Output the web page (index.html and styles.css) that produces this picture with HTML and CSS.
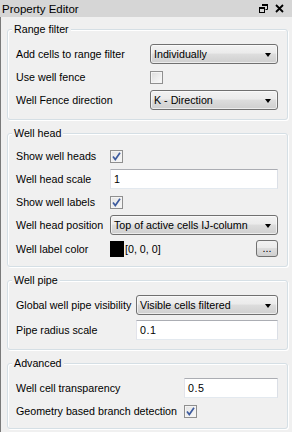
FILE: index.html
```html
<!DOCTYPE html>
<html>
<head>
<meta charset="utf-8">
<link rel="stylesheet" href="styles.css">
</head>
<body>
<div class="dock">
  <div class="titlebar">
    <span class="title">Property Editor</span>
    <span class="tb-icons">
      <svg width="9" height="9" viewBox="0 0 9 9"><path d="M3 0.5H8.5V5.5H6.5" fill="none" stroke="#000" stroke-width="1"/><rect x="3" y="0" width="6" height="2" fill="#000"/><rect x="0.5" y="3.5" width="5" height="5" fill="none" stroke="#000"/><rect x="0" y="3" width="6" height="2" fill="#000"/></svg>
      <svg width="9" height="9" viewBox="0 0 9 9"><path d="M1 1L8 8M8 1L1 8" stroke="#000" stroke-width="1.8"/></svg>
    </span>
  </div>
  <div class="content">
    <div class="group g-range">
      <div class="legend">Range filter</div>
      <div class="rows">
        <div class="label">Add cells to range filter</div>
        <div class="combo"><span>Individually</span><i class="arrow"></i></div>
        <div class="label chk-row">Use well fence</div>
        <div class="chk-row"><span class="check"></span></div>
        <div class="label">Well Fence direction</div>
        <div class="combo"><span>K - Direction</span><i class="arrow"></i></div>
      </div>
    </div>
    <div class="group g-head">
      <div class="legend">Well head</div>
      <div class="rows">
        <div class="label chk-row">Show well heads</div>
        <div class="chk-row"><span class="check on"><svg width="11" height="11" viewBox="0 0 11 11"><path d="M2 5.5L4.3 8.5L9 1.8" fill="none" stroke="#3d5b9e" stroke-width="1.7"/></svg></span></div>
        <div class="label">Well head scale</div>
        <div class="textbox">1</div>
        <div class="label chk-row">Show well labels</div>
        <div class="chk-row"><span class="check on"><svg width="11" height="11" viewBox="0 0 11 11"><path d="M2 5.5L4.3 8.5L9 1.8" fill="none" stroke="#3d5b9e" stroke-width="1.7"/></svg></span></div>
        <div class="label">Well head position</div>
        <div class="combo"><span>Top of active cells IJ-column</span><i class="arrow"></i></div>
        <div class="label color-row">Well label color</div>
        <div class="color-row colorfield"><span class="swatch"></span><span>[0, 0, 0]</span><span class="btn">...</span></div>
      </div>
    </div>
    <div class="group g-pipe">
      <div class="legend">Well pipe</div>
      <div class="rows">
        <div class="label">Global well pipe visibility</div>
        <div class="combo"><span>Visible cells filtered</span><i class="arrow"></i></div>
        <div class="label">Pipe radius scale</div>
        <div class="textbox">0.1</div>
      </div>
    </div>
    <div class="group g-adv">
      <div class="legend">Advanced</div>
      <div class="rows">
        <div class="label">Well cell transparency</div>
        <div class="textbox">0.5</div>
        <div class="label chk-row">Geometry based branch detection</div>
        <div class="chk-row"><span class="check on"><svg width="11" height="11" viewBox="0 0 11 11"><path d="M2 5.5L4.3 8.5L9 1.8" fill="none" stroke="#3d5b9e" stroke-width="1.7"/></svg></span></div>
      </div>
    </div>
  </div>
</div>
</body>
</html>
```
FILE: styles.css
```css
html, body {
  margin: 0;
  padding: 0;
}
body {
  width: 292px;
  height: 432px;
  overflow: hidden;
  background: #f0f0f0;
  font-family: "Liberation Sans", Arial, sans-serif;
  font-size: 10.7px;
  color: #000;
}
.dock {
  height: 432px;
  display: flex;
  flex-direction: column;
}
.titlebar {
  height: 17px;
  background: #d6d6d6;
  display: flex;
  align-items: center;
  justify-content: space-between;
  padding: 0 8px 0 2px;
  font-size: 11.5px;
}
.tb-icons {
  display: flex;
  gap: 7px;
  align-items: center;
}
.tb-icons svg {
  display: block;
}
.content {
  flex: 1;
  border-left: 1px solid #7a7a7a;
  display: flex;
  flex-direction: column;
  gap: 13px;
  padding-top: 12px;
}
.group {
  box-sizing: border-box;
  margin-left: 6px;
  width: 281px;
  border: 1px solid #d5dfe5;
  border-radius: 3px;
  box-shadow: inset 1px 1px 0 #fff, 1px 1px 0 #fff;
  padding: 0 9px 9px 8px;
}
.legend {
  margin: -8px 0 0 -4px;
  width: fit-content;
  background: #f0f0f0;
  padding: 0 2px;
  height: 14px;
  line-height: 14px;
}
.rows {
  margin-top: 8px;
  display: grid;
  row-gap: 5px;
  align-items: center;
}
.g-range .rows { grid-template-columns: 134px minmax(0, 1fr); }
.g-head .rows { grid-template-columns: 94px minmax(0, 1fr); }
.g-pipe .rows { grid-template-columns: 120px minmax(0, 1fr); }
.g-adv .rows { grid-template-columns: 168px minmax(0, 1fr); }
.label {
  white-space: nowrap;
  line-height: 14px;
}
.chk-row {
  height: 16px;
  display: flex;
  align-items: center;
}
.combo {
  height: 20px;
  box-sizing: border-box;
  border: 1px solid #707070;
  border-radius: 3px;
  background: linear-gradient(#f2f2f2 0%, #ebebeb 45%, #dddddd 50%, #cfcfcf 100%);
  box-shadow: inset 0 0 0 1px rgba(255,255,255,0.6);
  display: flex;
  align-items: center;
  justify-content: space-between;
  padding: 0 6px 0 3px;
  white-space: nowrap;
}
.arrow {
  width: 0;
  height: 0;
  border-left: 3.5px solid transparent;
  border-right: 3.5px solid transparent;
  border-top: 4px solid #000;
  margin-top: 1px;
}
.textbox {
  height: 20px;
  box-sizing: border-box;
  background: #fff;
  border: 1px solid #e3e9ef;
  border-top-color: #abadb3;
  border-left-color: #e2e3ea;
  border-right-color: #dbdfe6;
  padding: 0 3px;
  display: flex;
  align-items: center;
  letter-spacing: 0.6px;
}
.check {
  width: 13px;
  height: 13px;
  box-sizing: border-box;
  border: 1px solid #8f8f8f;
  background: linear-gradient(135deg, #dcdcdc, #fbfbfb);
  box-shadow: inset 0 0 0 1px #f4f4f4;
  display: flex;
  align-items: center;
  justify-content: center;
}
.check.on {
  background: linear-gradient(135deg, #e4e4e4, #f8f8f8);
}
.check svg { display: block; }
.color-row {
  height: 17px;
  display: flex;
  align-items: center;
}
.colorfield {
  gap: 1px;
}
.swatch {
  width: 14px;
  height: 16px;
  background: #000;
}
.btn {
  margin-left: auto;
  width: 22px;
  height: 17px;
  box-sizing: border-box;
  border: 1px solid #707070;
  border-radius: 3px;
  background: linear-gradient(#f2f2f2 0%, #ebebeb 45%, #dddddd 50%, #cfcfcf 100%);
  display: flex;
  align-items: center;
  justify-content: center;
  line-height: 1;
  padding-bottom: 1px;
}
```
